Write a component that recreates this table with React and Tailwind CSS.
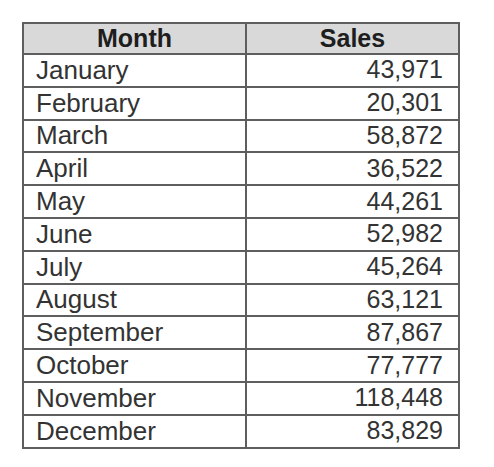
const rows = [
  ['January', '43,971'],
  ['February', '20,301'],
  ['March', '58,872'],
  ['April', '36,522'],
  ['May', '44,261'],
  ['June', '52,982'],
  ['July', '45,264'],
  ['August', '63,121'],
  ['September', '87,867'],
  ['October', '77,777'],
  ['November', '118,448'],
  ['December', '83,829'],
];

export default function App() {
  return (
    <div className="w-[494px] h-[467px] bg-white pt-[22px] pl-[22px] font-['Liberation_Sans',Arial,sans-serif] text-[#333333]">
      <div className="w-[438px] border-2 border-[#5e5e5e]">
        <div className="grid grid-cols-[223px_1fr] h-[29px] bg-[#d9d9d9] text-[25px] font-bold leading-none text-[#1e1e1e]">
          <div className="flex items-center justify-center border-r-2 border-[#5e5e5e]">Month</div>
          <div className="flex items-center justify-center">Sales</div>
        </div>
        {rows.map(([month, sales]) => (
          <div
            key={month}
            className="grid grid-cols-[223px_1fr] h-[32.8px] border-t-2 border-[#5e5e5e] leading-none"
          >
            <div className="flex items-center pl-[12px] pb-[1px] border-r-2 border-[#5e5e5e] text-[26px]">{month}</div>
            <div className="flex items-center justify-end pr-[15px] pb-[1px] text-[25px]">{sales}</div>
          </div>
        ))}
      </div>
    </div>
  );
}
